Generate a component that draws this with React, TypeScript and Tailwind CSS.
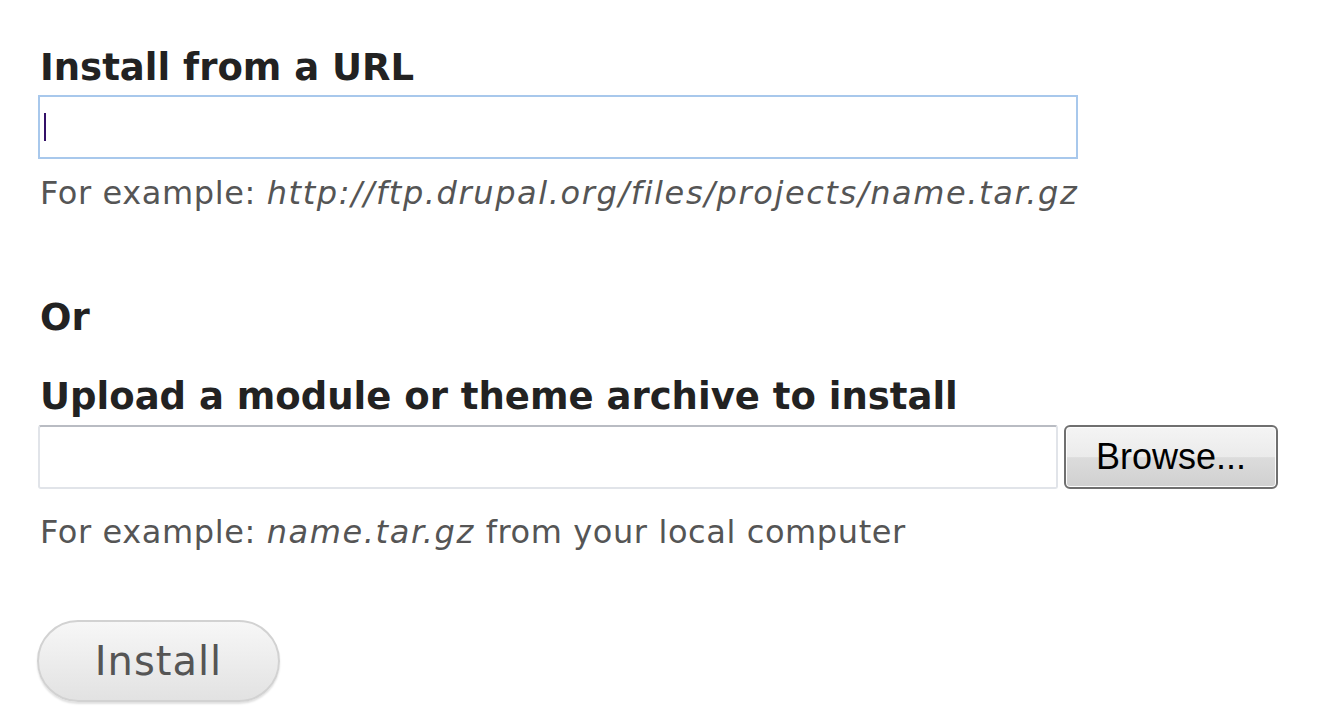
export default function App() {
  return (
    <div className="min-h-screen bg-white px-[40px] pt-[49px] font-['DejaVu_Sans',Verdana,sans-serif]">
      <div className="w-[1240px]">
        <label className="block text-[37px] leading-[37px] font-bold text-[#222]">Install from a URL</label>
        <div className="mt-[9px] -ml-[2px] flex h-[64px] w-[1040px] items-center border-2 border-[#a8c8ec] bg-white pl-[4px]">
          <span className="h-[28px] w-[2px] bg-[#341068]" />
        </div>
        <p className="mt-[18px] text-[32px] leading-[32px] tracking-[0.6px] text-[#555]">
          For example: <em className="tracking-[1.6px]">http://ftp.drupal.org/files/projects/name.tar.gz</em>
        </p>

        <p className="mt-[90px] text-[37px] leading-[37px] font-bold text-[#222]">Or</p>

        <label className="mt-[42px] block text-[37px] leading-[37px] font-bold text-[#222]">
          Upload a module or theme archive to install
        </label>
        <div className="mt-[10px] -ml-[2px] flex items-center gap-[6px]">
          <div className="h-[64px] w-[1020px] rounded-[3px] border-2 border-[#e1e4e9] border-t-[#b9bcc3] bg-white" />
          <button className="h-[64px] w-[214px] rounded-[6px] border-2 border-[#6f6f6f] bg-[linear-gradient(#f4f4f4_0%,#ebebeb_50%,#dcdcdc_51%,#d0d0d0_100%)] font-['Liberation_Sans',Arial,sans-serif] text-[36px] text-black shadow-[inset_0_0_0_1px_#fcfcfc]">
            Browse...
          </button>
        </div>
        <p className="mt-[27px] text-[32px] leading-[32px] tracking-[0.6px] text-[#555]">
          For example: <em className="tracking-[1.6px]">name.tar.gz</em> from your local computer
        </p>

        <button className="mt-[72px] -ml-[3px] h-[82px] w-[243px] rounded-full border-2 border-[#d2d2d2] bg-gradient-to-b from-[#f7f7f7] to-[#e2e2e2] text-[40px] tracking-[1px] text-[#555] shadow-[0_2px_2px_rgba(0,0,0,0.12)]">
          Install
        </button>
      </div>
    </div>
  )
}
